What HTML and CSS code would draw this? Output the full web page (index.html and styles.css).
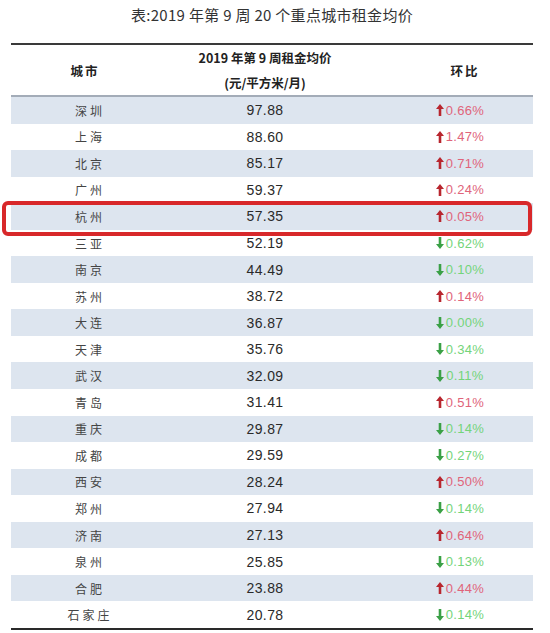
FILE: index.html
```html
<!DOCTYPE html>
<html lang="zh-CN">
<head>
<meta charset="utf-8">
<title>表:2019 年第 9 周 20 个重点城市租金均价</title>
<link rel="stylesheet" href="styles.css">
</head>
<body>
<div class="page">
  <h1 class="title">表:2019 年第 9 周 20 个重点城市租金均价</h1>
  <div class="table">
    <div class="head">
      <div class="c1">城市</div>
      <div class="c2"><span>2019 年第 9 周租金均价</span><span>(元/平方米/月)</span></div>
      <div class="c3">环比</div>
    </div>
    <div class="body" id="rows"></div>
  </div>
</div>
<script src="app.js"></script>
</body>
</html>
```
FILE: app.js
```js
var data = [
  ["深圳","97.88","up","0.66%"],
  ["上海","88.60","up","1.47%"],
  ["北京","85.17","up","0.71%"],
  ["广州","59.37","up","0.24%"],
  ["杭州","57.35","up","0.05%"],
  ["三亚","52.19","down","0.62%"],
  ["南京","44.49","down","0.10%"],
  ["苏州","38.72","up","0.14%"],
  ["大连","36.87","down","0.00%"],
  ["天津","35.76","down","0.34%"],
  ["武汉","32.09","down","0.11%"],
  ["青岛","31.41","up","0.51%"],
  ["重庆","29.87","down","0.14%"],
  ["成都","29.59","down","0.27%"],
  ["西安","28.24","up","0.50%"],
  ["郑州","27.94","down","0.14%"],
  ["济南","27.13","up","0.64%"],
  ["泉州","25.85","down","0.13%"],
  ["合肥","23.88","up","0.44%"],
  ["石家庄","20.78","down","0.14%"]
];
var up = '<svg class="arr" viewBox="0 0 8 12" width="8" height="12"><path d="M4 0 L8 5 L5.3 5 L5.3 12 L2.7 12 L2.7 5 L0 5 Z"/></svg>';
var down = '<svg class="arr" viewBox="0 0 8 12" width="8" height="12"><path d="M4 12 L8 7 L5.3 7 L5.3 0 L2.7 0 L2.7 7 L0 7 Z"/></svg>';
var html = "";
data.forEach(function (r, i) {
  var cls = "row" + (i % 2 === 0 ? " shade" : "") + (r[0] === "杭州" ? " hl" : "");
  html += '<div class="' + cls + '">' +
    '<div class="c1">' + r[0] + '</div>' +
    '<div class="c2 num">' + r[1] + '</div>' +
    '<div class="c3 chg ' + r[2] + '">' + (r[2] === "up" ? up : down) + '<span>' + r[3] + '</span></div>' +
    (r[0] === "杭州" ? '<div class="mark"></div>' : '') +
    '</div>';
});
document.getElementById("rows").innerHTML = html;
```
FILE: styles.css
```css
html, body { margin: 0; padding: 0; background: #fff; }
body { font-family: "Noto Sans CJK SC", "Liberation Sans", sans-serif; color: #333; }
.page { width: 550px; height: 633px; overflow: hidden; padding-top: 4px; box-sizing: border-box; }
.title {
  margin: 0 0 0 11px; width: 522px; text-align: center;
  font-size: 15px; font-weight: normal; line-height: 22px; color: #333;
  letter-spacing: 0.3px; height: 39px;
}
.table { margin-left: 11px; width: 522px; border-top: 2px solid #3a3a3a; border-bottom: 2px solid #2a2a2a; }
.head { display: flex; height: 50px; border-bottom: 2px solid #a3acb8; align-items: center; font-weight: bold; font-size: 12.5px; color: #222; }
.head .c2 { display: flex; flex-direction: column; align-items: center; gap: 8px; line-height: 17px; }
.head .c1 { letter-spacing: 2px; }
.head .c3 { letter-spacing: 2px; padding-left: 26px; box-sizing: border-box; }
.c1 { width: 148px; text-align: center; padding-left: 0; }
.c2 { width: 212px; text-align: center; }
.c3 { width: 162px; display: flex; justify-content: center; padding-left: 16px; box-sizing: border-box; }
.row { display: flex; height: 26.55px; align-items: center; position: relative; }
.row.shade { background: #dde5ef; }
.row .c1 { font-size: 12px; letter-spacing: 3px; color: #444; padding-left: 10px; box-sizing: border-box; }
.num { font-family: "Liberation Sans", sans-serif; font-size: 14px; color: #2a2a2a; letter-spacing: 0.4px; }
.chg { align-items: center; font-family: "Liberation Sans", sans-serif; font-size: 13px; letter-spacing: 0.3px; }
.chg .arr { margin-right: 2px; }
.chg.up .arr { fill: #b8262e; }
.chg.up span { color: #e0647a; }
.chg.down .arr { fill: #3aa046; }
.chg.down span { color: #74d47a; }
.mark {
  position: absolute; left: -9px; top: -2px; width: 530px; height: 35px;
  border: 4px solid #d8282a; border-radius: 6px; box-sizing: border-box;
}
```
